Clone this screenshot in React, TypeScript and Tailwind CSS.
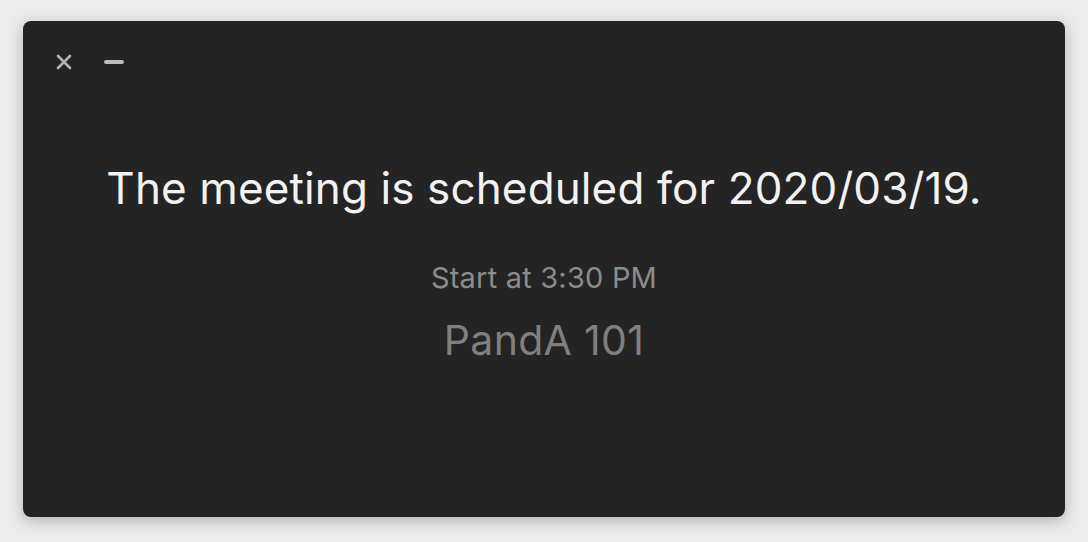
export default function App() {
  return (
    <div className="w-[1088px] h-[542px] bg-[#ececec] pt-[21px] pl-[23px] font-['Inter',sans-serif]">
      <div className="w-[1042px] h-[496px] bg-[#242424] rounded-[8px] shadow-[0_4px_16px_rgba(0,0,0,0.25)] flex flex-col">
        <div className="flex items-center gap-[32px] pl-[33px] pt-[33px] h-[49px]">
          <svg width="16" height="16" viewBox="0 0 16 16" className="shrink-0">
            <path d="M2 2L14 14M14 2L2 14" stroke="#b4b4b4" strokeWidth="2.6" strokeLinecap="round" />
          </svg>
          <div className="w-[20px] h-[4px] rounded-full bg-[#bcbcbc]" />
        </div>
        <div className="flex flex-col items-center">
          <h1 className="mt-[96px] text-[44px] leading-none text-[#f2f2f2] tracking-[0.12px]">
            The meeting is scheduled for 2020/03/19.
          </h1>
          <p className="mt-[53px] text-[29px] leading-none text-[#8c8c8c] tracking-[0.2px]">Start at 3:30 PM</p>
          <p className="mt-[28px] text-[41px] leading-none text-[#808080] tracking-[0.3px]">PandA 101</p>
        </div>
      </div>
    </div>
  );
}
